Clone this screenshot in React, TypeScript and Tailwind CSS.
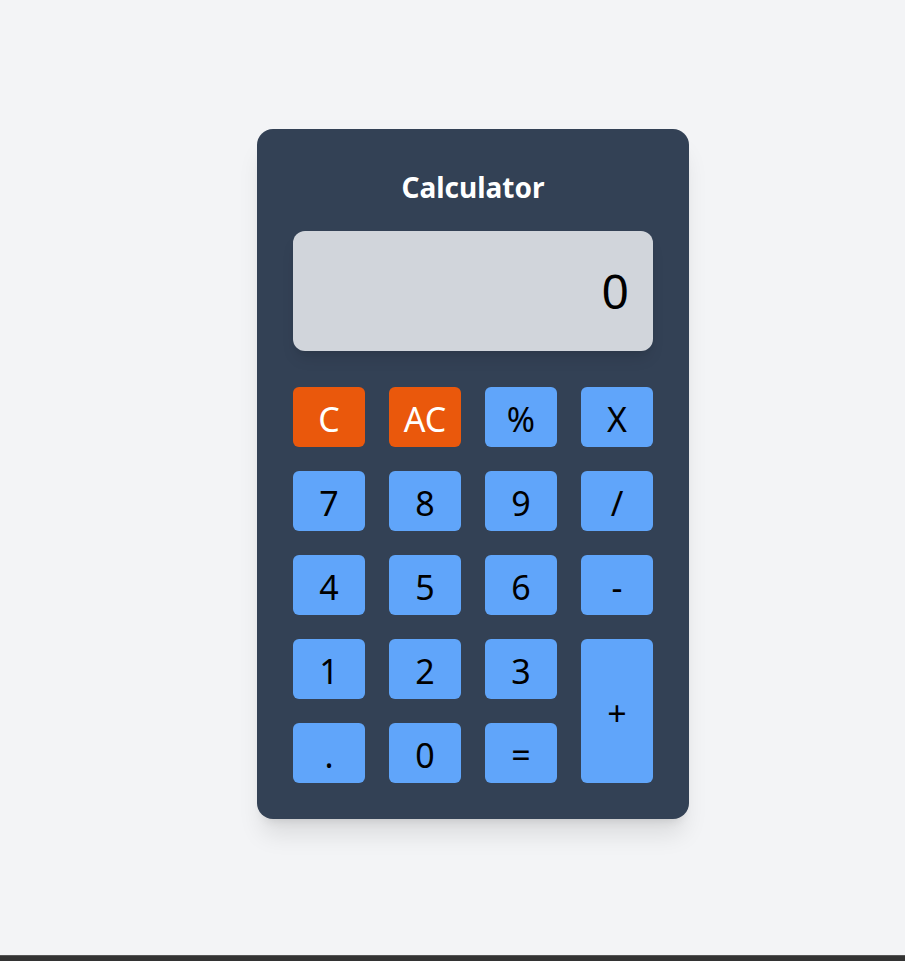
import React from "react";

const font = { fontFamily: '"Noto Sans", "Open Sans", sans-serif' };

export default function App() {
  const blue = "bg-[#60a5fa] text-black";
  const orange = "bg-[#ea580c] text-white";
  const keys: { label: string; cls: string; extra?: string }[] = [
    { label: "C", cls: orange },
    { label: "AC", cls: orange },
    { label: "%", cls: blue },
    { label: "X", cls: blue },
    { label: "7", cls: blue },
    { label: "8", cls: blue },
    { label: "9", cls: blue },
    { label: "/", cls: blue },
    { label: "4", cls: blue },
    { label: "5", cls: blue },
    { label: "6", cls: blue },
    { label: "-", cls: blue },
    { label: "1", cls: blue },
    { label: "2", cls: blue },
    { label: "3", cls: blue },
    { label: "+", cls: blue, extra: "row-span-2 h-auto" },
    { label: ".", cls: blue },
    { label: "0", cls: blue },
    { label: "=", cls: blue },
  ];
  return (
    <div className="flex flex-col w-full" style={font}>
      <div className="h-[955px] bg-[#f3f4f6] pt-[129px] pl-[257px]">
        <div className="w-[432px] rounded-2xl bg-[#334155] p-9 shadow-xl">
          <h1 className="text-center text-[28px] font-bold text-white leading-[44px] mb-[22px]">Calculator</h1>
          <div className="h-[120px] rounded-xl bg-[#d1d5db] shadow-lg flex items-center justify-end px-6 text-5xl text-black">
            0
          </div>
          <div className="mt-9 grid grid-cols-[repeat(4,72px)] auto-rows-[60px] gap-6">
            {keys.map((k) => (
              <button
                key={k.label}
                className={`${k.cls} ${k.extra ?? ""} rounded-md text-[34px] leading-none pt-[3px] flex items-center justify-center`}
              >
                {k.label}
              </button>
            ))}
          </div>
        </div>
      </div>
      <div className="h-[6px] bg-[#333333] border-t border-[#555555]" />
    </div>
  );
}
